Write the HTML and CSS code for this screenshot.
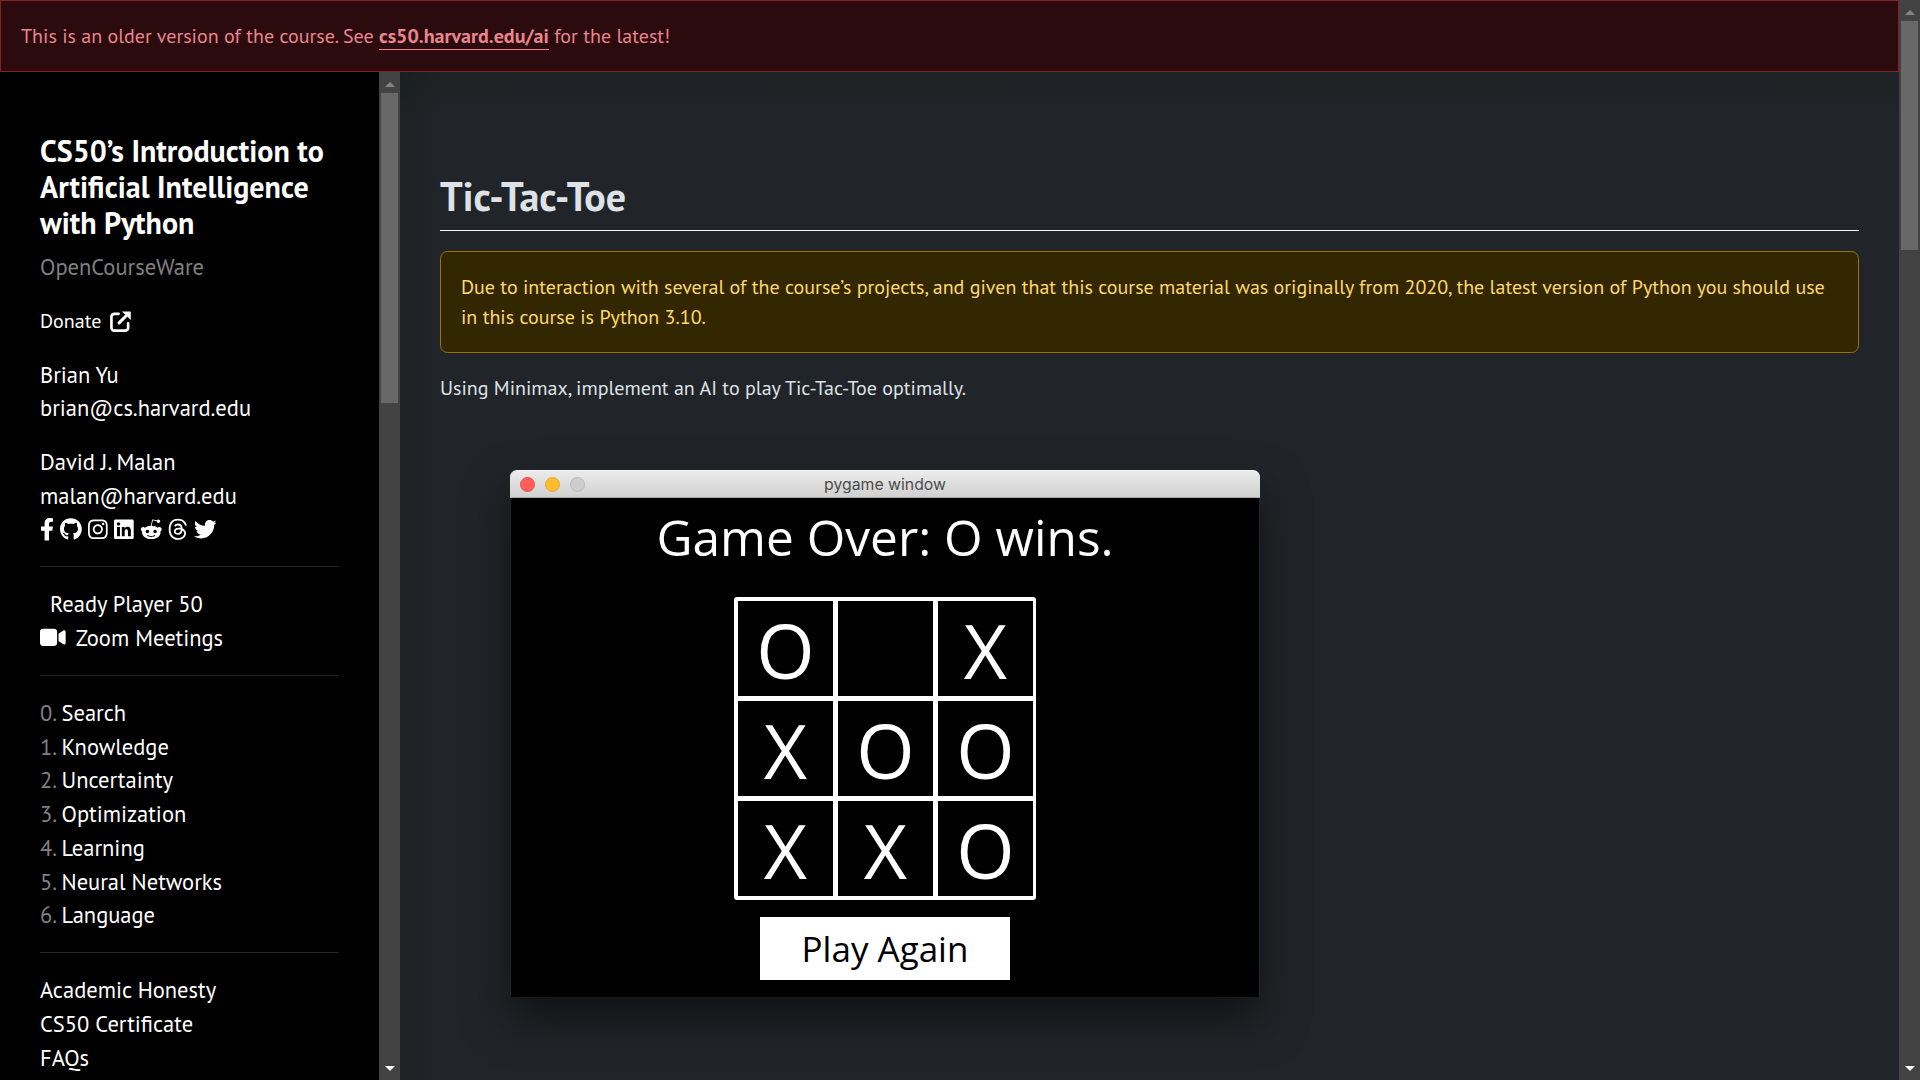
FILE: index.html
```
<!DOCTYPE html>
<html lang="en">
<head>
<meta charset="utf-8">
<title>Tic-Tac-Toe - CS50's Introduction to Artificial Intelligence with Python</title>
<link rel="stylesheet" href="styles.css">
</head>
<body>
<div class="page">
  <div class="alert alert-danger" role="alert">This is an older version of the course. See <a href="#">cs50.harvard.edu/ai</a> for the latest!</div>
  <div class="columns">
    <aside>
      <header>
        <h1>CS50’s Introduction to Artificial Intelligence with Python</h1>
        <p class="ocw">OpenCourseWare</p>
      </header>
      <p class="donate"><a href="#">Donate</a><svg viewBox="0 0 22 22"><path d="M9 3H4.5A3 3 0 0 0 1.500 6v11.500a3 3 0 0 0 3 3H16a3 3 0 0 0 3-3V13" fill="none" stroke="#fff" stroke-width="2.800" stroke-linecap="round"/><path d="M9.500 12.500 17 5" stroke="#fff" stroke-width="3.200" stroke-linecap="round"/><path d="M12.500 .4H21a.8.8 0 0 1 .8.8v8.300z"/></svg></p>
      <p>Brian Yu<br><a href="#">brian@cs.harvard.edu</a></p>
      <div class="person">
        <div>David J. Malan<br><a href="#">malan@harvard.edu</a></div>
        <div class="social">
          <svg viewBox="0 0 320 512"><path d="M279.14 288l14.22-92.66h-88.91v-60.13c0-25.35 12.42-50.06 52.24-50.06h40.42V6.260S260.430 0 225.360 0c-73.220 0-121.080 44.380-121.080 124.720v70.620H22.890V288h81.390v224h100.170V288z"/></svg>
          <svg viewBox="0 0 496 512"><path d="M165.900 397.400c0 2-2.300 3.600-5.200 3.600-3.300.3-5.600-1.300-5.600-3.600 0-2 2.300-3.600 5.200-3.600 3-.3 5.600 1.300 5.600 3.600zm-31.100-4.500c-.7 2 1.300 4.300 4.300 4.900 2.600 1 5.600 0 6.200-2s-1.300-4.300-4.300-5.200c-2.600-.7-5.500.3-6.200 2.300zm44.200-1.700c-2.900.7-4.900 2.600-4.600 4.900.3 2 2.900 3.300 5.900 2.600 2.900-.7 4.900-2.600 4.600-4.600-.3-1.900-3-3.200-5.900-2.900zM244.800 8C106.100 8 0 113.300 0 252c0 110.900 69.800 205.800 169.500 239.200 12.800 2.300 17.300-5.600 17.300-12.100 0-6.200-.3-40.400-.3-61.400 0 0-70 15-84.700-29.800 0 0-11.400-29.100-27.800-36.600 0 0-22.900-15.700 1.600-15.400 0 0 24.900 2 38.600 25.800 21.900 38.600 58.600 27.500 72.900 20.900 2.300-16 8.800-27.100 16-33.700-55.900-6.200-112.300-14.300-112.300-110.500 0-27.500 7.600-41.300 23.600-58.900-2.600-6.500-11.100-33.300 2.600-67.900 20.900-6.500 69 27 69 27 20-5.600 41.500-8.500 62.800-8.500s42.800 2.900 62.800 8.500c0 0 48.100-33.600 69-27 13.700 34.700 5.200 61.400 2.600 67.900 16 17.700 25.800 31.500 25.800 58.900 0 96.500-58.900 104.200-114.800 110.500 9.200 7.900 17 22.900 17 46.400 0 33.700-.3 75.400-.3 83.600 0 6.500 4.600 14.400 17.300 12.100C428.200 457.800 496 362.900 496 252 496 113.300 383.500 8 244.800 8z"/></svg>
          <svg viewBox="0 0 448 512"><path d="M224.100 141c-63.600 0-114.900 51.300-114.900 114.900s51.300 114.900 114.900 114.900S339 319.500 339 255.900 287.700 141 224.100 141zm0 189.600c-41.100 0-74.700-33.500-74.700-74.700s33.500-74.700 74.700-74.700 74.700 33.500 74.700 74.700-33.600 74.700-74.700 74.700zm146.400-194.300c0 14.900-12 26.800-26.800 26.800-14.900 0-26.800-12-26.800-26.800s12-26.800 26.800-26.800 26.800 12 26.800 26.800zm76.100 27.200c-1.700-35.900-9.900-67.700-36.200-93.900-26.200-26.200-58-34.400-93.900-36.200-37-2.100-147.900-2.100-184.900 0-35.800 1.700-67.600 9.900-93.900 36.100s-34.400 58-36.200 93.900c-2.100 37-2.100 147.900 0 184.900 1.700 35.900 9.900 67.700 36.200 93.900s58 34.400 93.900 36.200c37 2.100 147.900 2.100 184.900 0 35.900-1.700 67.700-9.900 93.900-36.200 26.200-26.200 34.400-58 36.200-93.900 2.100-37 2.100-147.800 0-184.800zM398.800 388c-7.800 19.600-22.900 34.700-42.600 42.600-29.500 11.700-99.500 9-132.100 9s-102.700 2.600-132.100-9c-19.600-7.800-34.700-22.900-42.600-42.600-11.700-29.500-9-99.500-9-132.100s-2.600-102.700 9-132.100c7.800-19.600 22.900-34.700 42.600-42.600 29.500-11.700 99.500-9 132.100-9s102.700-2.600 132.100 9c19.600 7.800 34.700 22.900 42.600 42.600 11.700 29.500 9 99.500 9 132.100s2.700 102.700-9 132.100z"/></svg>
          <svg viewBox="0 0 448 512"><path d="M416 32H31.900C14.300 32 0 46.500 0 64.300v383.400C0 465.500 14.300 480 31.900 480H416c17.600 0 32-14.500 32-32.300V64.300c0-17.800-14.400-32.300-32-32.300zM135.400 416H69V202.200h66.500V416zm-33.200-243c-21.300 0-38.500-17.300-38.500-38.500S80.900 96 102.200 96c21.200 0 38.500 17.300 38.500 38.500 0 21.300-17.200 38.500-38.500 38.500zm282.100 243h-66.400V312c0-24.800-.5-56.700-34.500-56.700-34.600 0-39.900 27-39.900 54.900V416h-66.400V202.200h63.700v29.200h.9c8.900-16.800 30.600-34.500 62.900-34.500 67.200 0 79.700 44.300 79.700 101.900V416z"/></svg>
          <svg viewBox="0 0 512 512"><path d="M440.300 203.500c-15 0-28.200 6.200-37.900 15.900-35.700-24.700-83.800-40.600-137.100-42.300L293 52.300l88.200 19.800c0 21.600 17.600 39.200 39.200 39.200 22 0 39.700-18.100 39.700-39.700s-17.600-39.700-39.700-39.700c-15.400 0-28.700 9.300-35.300 22l-97.400-21.600c-4.900-1.300-9.700 2.200-11 7.100L246.300 177c-52.900 2.200-100.500 18.100-136.300 42.800-9.700-10.100-23.400-16.300-38.400-16.300-55.600 0-73.800 74.600-22.900 100.100-1.800 7.900-2.600 16.300-2.600 24.700 0 83.800 94.400 151.700 210.300 151.700 116.400 0 210.800-67.900 210.800-151.700 0-8.400-.9-17.200-3.100-25.100 49.900-25.600 31.500-99.700-23.800-99.700zM129.400 308.900c0-22 17.600-39.700 39.700-39.700 21.600 0 39.200 17.600 39.200 39.700 0 21.600-17.600 39.200-39.200 39.200-22 .1-39.700-17.600-39.700-39.200zm214.300 93.500c-36.400 36.400-139.100 36.400-175.500 0-4-3.500-4-9.700 0-13.700 3.500-3.500 9.700-3.500 13.200 0 27.800 28.500 120 29 149 0 3.500-3.500 9.700-3.500 13.200 0 4.100 4 4.100 10.200.1 13.700zm-.8-54.200c-21.600 0-39.200-17.600-39.200-39.200 0-22 17.600-39.700 39.200-39.700 22 0 39.700 17.600 39.700 39.700-.1 21.500-17.700 39.200-39.700 39.200z"/></svg>
          <svg viewBox="0 0 448 512"><path d="M331.500 235.700c2.200 .9 4.200 1.900 6.300 2.800c29.200 14.100 50.600 35.200 61.800 61.400c15.700 36.500 17.200 95.800-30.300 143.200c-36.200 36.200-80.300 52.500-142.600 53h-.3c-70.200-.5-124.100-24.100-160.400-70.200c-32.300-41-48.900-98.100-49.500-169.600V256v-.2C17 184.300 33.600 127.200 65.900 86.200C102.200 40.100 156.200 16.500 226.400 16h.3c70.300 .5 124.900 24 162.300 69.900c18.400 22.700 32 50 40.600 81.700l-40.400 10.800c-7.100-25.800-17.800-47.800-32.200-65.400c-29.200-35.800-73-54.200-130.500-54.600c-57 .5-100.100 18.800-128.200 54.400C72.100 146.100 58.500 194.300 58 256c.5 61.700 14.100 109.900 40.300 143.300c28 35.600 71.200 53.900 128.200 54.400c51.400-.4 85.400-12.600 113.700-40.900c32.300-32.200 31.700-71.800 21.400-95.900c-6.100-14.200-17.100-26-31.900-34.900c-3.700 26.900-11.800 48.300-24.700 64.800c-17.100 21.800-41.400 33.600-72.700 35.300c-23.600 1.300-46.300-4.400-63.900-16c-20.800-13.800-33-34.800-34.300-59.300c-2.500-48.300 35.700-83 95.200-86.400c21.100-1.200 40.900-.3 59.200 2.800c-2.400-14.800-7.300-26.600-14.600-35.200c-10-11.700-25.600-17.700-46.200-17.800H227c-16.600 0-39 4.600-53.300 26.300l-34.400-23.600c19.200-29.100 50.300-45.100 87.800-45.100h.8c62.600 .4 99.900 39.500 103.700 107.700l-.2 .2zm-156 68.800c1.300 25.100 28.400 36.800 54.600 35.300c25.600-1.400 54.600-11.400 59.500-73.200c-13.200-2.900-27.800-4.400-43.400-4.400c-4.800 0-9.600 .1-14.400 .4c-42.900 2.400-57.200 23.200-56.200 41.800l-.1 .1z"/></svg>
          <svg viewBox="0 0 512 512"><path d="M459.370 151.716c.325 4.548.325 9.097.325 13.645 0 138.720-105.583 298.558-298.558 298.558-59.452 0-114.680-17.219-161.137-47.106 8.447.974 16.568 1.299 25.340 1.299 49.055 0 94.213-16.568 130.274-44.832-46.132-.975-84.792-31.188-98.112-72.772 6.498.974 12.995 1.624 19.818 1.624 9.421 0 18.843-1.300 27.614-3.573-48.081-9.747-84.143-51.980-84.143-102.985v-1.299c13.969 7.797 30.214 12.670 47.431 13.319-28.264-18.843-46.781-51.005-46.781-87.391 0-19.492 5.197-37.360 14.294-52.954 51.655 63.675 129.300 105.258 216.365 109.807-1.624-7.797-2.599-15.918-2.599-24.040 0-57.828 46.782-104.934 104.934-104.934 30.213 0 57.502 12.670 76.670 33.137 23.715-4.548 46.456-13.320 66.599-25.340-7.798 24.366-24.366 44.833-46.132 57.827 21.117-2.273 41.584-8.122 60.426-16.243-14.292 20.791-32.161 39.308-52.628 54.253z"/></svg>
        </div>
      </div>
      <hr>
      <ul>
        <li><span class="label">Ready Player 50</span></li>
        <li><svg class="video" viewBox="0 0 576 512"><path d="M0 128C0 92.700 28.700 64 64 64H320c35.300 0 64 28.700 64 64V384c0 35.300-28.700 64-64 64H64c-35.300 0-64-28.700-64-64V128zM559.100 99.800c10.400 5.600 16.900 16.400 16.900 28.200V384c0 11.800-6.500 22.600-16.900 28.200s-23 5-32.900-1.600l-96-64L416 337.100V320 192 174.900l14.200-9.500 96-64c9.800-6.500 22.400-7.200 32.900-1.600z"/></svg><span class="label">Zoom Meetings</span></li>
      </ul>
      <hr>
      <ul class="weeks">
        <li><span class="num">0.</span>Search</li>
        <li><span class="num">1.</span>Knowledge</li>
        <li><span class="num">2.</span>Uncertainty</li>
        <li><span class="num">3.</span>Optimization</li>
        <li><span class="num">4.</span>Learning</li>
        <li><span class="num">5.</span>Neural Networks</li>
        <li><span class="num">6.</span>Language</li>
      </ul>
      <hr>
      <ul>
        <li>Academic Honesty</li>
        <li>CS50 Certificate</li>
        <li>FAQs</li>
      </ul>
    </aside>
    <div class="scrollbar side-bar"><i class="up"></i><b class="thumb"></b><i class="down"></i></div>
    <main>
      <h1>Tic-Tac-Toe</h1>
      <div class="alert alert-warning" role="alert">Due to interaction with several of the course’s projects, and given that this course material was originally from 2020, the latest version of Python you should use in this course is Python 3.10.</div>
      <p>Using Minimax, implement an AI to play Tic-Tac-Toe optimally.</p>
      <figure class="window">
        <div class="titlebar">
          <div class="lights"><i class="red"></i><i class="yellow"></i><i class="gray"></i></div>
          <span>pygame window</span>
        </div>
        <div class="game">
          <div class="status">Game Over: O wins.</div>
          <div class="board">
            <div>O</div><div></div><div>X</div>
            <div>X</div><div>O</div><div>O</div>
            <div>X</div><div>X</div><div>O</div>
          </div>
          <div class="again">Play Again</div>
        </div>
      </figure>
    </main>
  </div>
</div>
<div class="scrollbar page-bar"><i class="up"></i><b class="thumb"></b><i class="down"></i></div>
</body>
</html>
```
FILE: styles.css
```
* { box-sizing: border-box; }
html, body { height: 100%; }
body {
  margin: 0;
  display: flex;
  overflow: hidden;
  background: #212529;
  color: #dee2e6;
  font: 20px/1.5 "PT Sans", "Noto Sans", sans-serif;
}
h1, p, ul, figure { margin: 0; padding: 0; }
ul { list-style: none; }
a { color: inherit; text-decoration: none; }
svg { display: block; flex: none; fill: #fff; }

.page { flex: 1; min-width: 0; display: flex; flex-direction: column; }
.alert { padding: 20px; border: 1px solid; }
.alert-danger { flex: none; background: #2c0b0e; border-color: #842029; color: #ea868f; }
.alert-danger a { font-weight: 700; border-bottom: 1px solid; }
.alert-warning { margin: 20px 0; background: #332701; border-color: #997404; color: #ffda6a; border-radius: 7.5px; }

.columns { flex: 1; min-height: 0; display: flex; }
aside {
  flex: none;
  width: 379px;
  padding: 61px 40px 0;
  overflow: hidden;
  background: #000;
  color: #fff;
  font-size: 22.5px;
}
aside h1 { margin-bottom: 9px; font-size: 30px; line-height: 36px; }
aside p { margin-bottom: 20px; }
.ocw, .num { color: #808080; }
.donate { display: flex; align-items: center; gap: 8.5px; height: 33.75px; padding-top: 1.5px; font-size: 20px; }
.donate svg { width: 21px; height: 21px; }
.social { display: flex; align-items: center; gap: 6.1px; height: 33.75px; }
.social svg { height: 22.5px; }
aside hr { margin: 20px 0; border: 0; border-top: 1px solid #262626; }
aside li { display: flex; align-items: center; height: 33.75px; white-space: nowrap; }
.label { padding-left: 10px; }
.video { height: 22.8px; }
.num { width: 21.5px; }

.scrollbar {
  flex: none;
  width: 21px;
  display: flex;
  flex-direction: column;
  align-items: center;
  background: #424242;
}
.scrollbar .up, .scrollbar .down { width: 100%; height: 21px; display: grid; place-items: center; }
.scrollbar .up::before, .scrollbar .down::before { content: ""; border: 5px solid transparent; }
.scrollbar .up::before { border-top: 0; border-bottom-color: #858585; margin-top: 3px; }
.scrollbar .down::before { border-bottom: 0; border-top-color: #fff; margin-bottom: 2px; }
.scrollbar .down { margin-top: auto; }
.thumb { width: 17px; background: #686868; }
.side-bar .thumb { height: 310px; }
.page-bar .thumb { height: 229px; }

main {
  flex: 1;
  min-width: 0;
  padding: 100px 40px 0;
  background:
    linear-gradient(to right, rgba(0, 10, 8, .13), transparent 45px),
    linear-gradient(to bottom, rgba(0, 10, 8, .12), transparent 45px);
}
main h1 { padding-bottom: 10px; border-bottom: 1px solid #f8f9fa; font-size: 40px; line-height: 48px; }

.window {
  width: 750px;
  margin: 67px 0 0 70px;
  border-radius: 7px 7px 0 0;
  box-shadow: 0 22px 45px rgba(0, 0, 0, .5);
}
.titlebar {
  display: grid;
  grid-template-columns: 1fr auto 1fr;
  align-items: center;
  height: 28px;
  padding: 0 10px;
  border-radius: 7px 7px 0 0;
  border-top: 1px solid #f6f6f6;
  border-bottom: 1px solid #a9a9a9;
  background: linear-gradient(#ebebeb, #d0d0d0);
  color: #4b4b4b;
  font: 15.8px/1 Inter, sans-serif;
}
.titlebar span { padding-top: 2px; }
.lights { display: flex; gap: 10px; }
.lights i { width: 15px; height: 15px; border: 1px solid; border-radius: 50%; }
.lights .red { background: #ff5f57; border-color: #e9504a; }
.lights .yellow { background: #ffbd2e; border-color: #e6a92c; }
.lights .gray { background: #cdcdcd; border-color: #bbb; }
.game {
  display: flex;
  flex-direction: column;
  align-items: center;
  height: 499px;
  margin: 0 1px;
  background: #000;
  color: #fff;
  font-family: "Open Sans", sans-serif;
}
.status { height: 99px; padding-top: 4px; font-size: 49.6px; line-height: 70px; }
.board {
  display: grid;
  grid-template-columns: repeat(3, 95px);
  grid-auto-rows: 95px;
  gap: 5px;
  padding: 4px 3px 4px 4px;
  border-radius: 3px;
  background: #fff;
}
.board div { background: #000; font-size: 75px; line-height: 98px; text-align: center; }
.again {
  width: 250px;
  height: 63px;
  margin-top: 17px;
  background: #fff;
  color: #000;
  font-size: 35px;
  line-height: 63px;
  text-align: center;
}
```
